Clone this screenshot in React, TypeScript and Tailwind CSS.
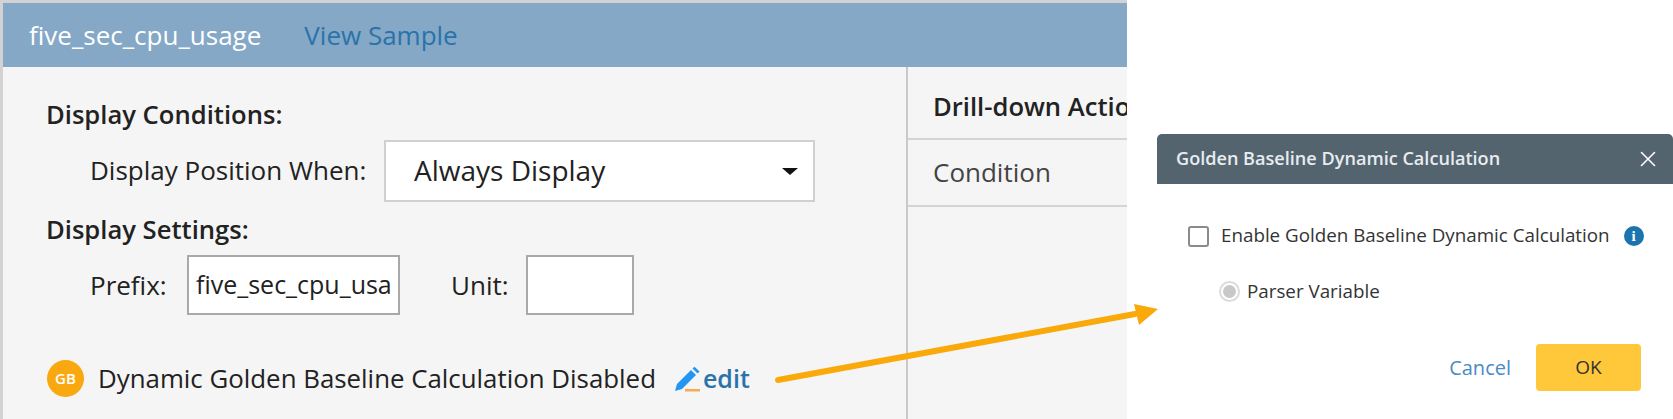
import React from 'react';
import { X } from 'lucide-react';

const font = "font-['Open_Sans',sans-serif]";

const MainPanel = () => {
  return (
    <div className="w-[1127px] h-[419px] shrink-0 flex flex-col overflow-hidden border-t-[3px] border-l-[3px] border-[#d2d2d2] bg-[#f5f5f5]">
      {/* Header */}
      <div className="h-[64px] shrink-0 flex items-center bg-[#84a8c6] pl-[26px]">
        <span className="text-[26px] leading-[36px] text-white">five_sec_cpu_usage</span>
        <span className="ml-[43px] text-[26px] leading-[36px] text-[#2a73aa]">View Sample</span>
      </div>

      <div className="flex flex-1 min-h-0">
        {/* Left column */}
        <div className="w-[903px] shrink-0 pl-[44px] pt-[33px] text-[26px] text-[#222]">
          <h3 className="-ml-[1px] text-[25.6px] font-semibold leading-[30px]">Display Conditions:</h3>

          <div className="flex items-center h-[62px] mt-[10px] pl-[43px]">
            <span className="w-[294px] shrink-0 leading-[34px] pb-[3px]">Display Position When:</span>
            <div className="w-[431px] h-[62px] flex items-center justify-between bg-white border-2 border-[#d0d0d0] pl-[28px] pr-[15px]">
              <span className="text-[28px] leading-[38px] pb-[3px]">Always Display</span>
              <span className="w-0 h-0 border-x-[8px] border-t-[7px] border-x-transparent border-t-[#111]" />
            </div>
          </div>

          <h3 className="-ml-[1px] text-[25.6px] font-semibold leading-[30px] mt-[13px]">Display Settings:</h3>

          <div className="flex items-center h-[60px] mt-[10px] pl-[43px]">
            <span className="w-[97px] shrink-0 leading-[34px]">Prefix:</span>
            <div className="w-[213px] h-[60px] flex items-center bg-white border-2 border-[#a9a9a9] px-[7px]">
              <span className="block overflow-hidden whitespace-nowrap text-[25px]">five_sec_cpu_usage</span>
            </div>
            <span className="ml-[51px] w-[75px] shrink-0 leading-[34px]">Unit:</span>
            <div className="w-[108px] h-[60px] bg-white border-2 border-[#a9a9a9]" />
          </div>

          {/* Golden baseline status */}
          <div className="flex items-center h-[37px] mt-[45px]">
            <span className="w-[37px] h-[37px] shrink-0 flex items-center justify-center rounded-full bg-[#f9a90f] text-[15px] font-semibold text-white">
              GB
            </span>
            <span className="ml-[14px] text-[25.85px] whitespace-nowrap">Dynamic Golden Baseline Calculation Disabled</span>
            <span className="ml-[18px] flex items-center">
              <svg width="28" height="26" viewBox="0 0 28 26">
                <path d="M1 25 L3 18 L17 4 L22 9 L8 23 Z" fill="#2196f3" />
                <path d="M18.5 2.5 L20.5 0.8 L25.5 5.5 L23.5 7.5 Z" fill="#2196f3" />
                <rect x="11" y="23" width="15" height="2.5" fill="#f9a953" />
              </svg>
              <span className="ml-[1px] text-[25px] font-semibold text-[#2a73aa]">edit</span>
            </span>
          </div>
        </div>

        {/* Drill-down column */}
        <div className="flex-1 min-w-0 border-l-2 border-[#c9c9c9]">
          <div className="h-[73px] flex items-center border-b-2 border-[#d4d4d4] pl-[25px] pt-[10px]">
            <span className="text-[25.6px] font-semibold text-[#222] whitespace-nowrap">Drill-down Action</span>
          </div>
          <div className="h-[67px] flex items-center border-b-2 border-[#d4d4d4] pl-[25px]">
            <span className="text-[26px] text-[#444]">Condition</span>
          </div>
        </div>
      </div>
    </div>
  );
};

const Dialog = () => {
  return (
    <div className="w-[516px] shrink-0 ml-[30px] mt-[134px] text-[#333]">
      <div className="h-[50px] flex items-center justify-between bg-[#53646f] rounded-t-[5px] pl-[19px] pr-[12px]">
        <span className="text-[18.1px] font-semibold text-[#e8ecef]">Golden Baseline Dynamic Calculation</span>
        <X size={26} strokeWidth={1.5} className="text-white" />
      </div>

      <div className="flex items-center h-[26px] mt-[39px] pl-[31px] text-[18.8px]">
        <span className="w-[21px] h-[21px] shrink-0 rounded-[3px] border-2 border-[#8a8a8a] bg-white" />
        <span className="ml-[12px] whitespace-nowrap -translate-y-[1px]">Enable Golden Baseline Dynamic Calculation</span>
        <span className="ml-[14px] w-[20px] h-[20px] shrink-0 flex items-center justify-center rounded-full bg-[#1a75ae] text-[15px] font-bold text-white font-['Liberation_Serif',serif]">
          i
        </span>
      </div>

      <div className="flex items-center h-[26px] mt-[29px] pl-[62px] text-[18.8px]">
        <span className="w-[21px] h-[21px] shrink-0 flex items-center justify-center rounded-full border-2 border-[#dcdcdc] bg-white">
          <span className="w-[13px] h-[13px] rounded-full bg-[#c8c8c8]" />
        </span>
        <span className="ml-[7px]">Parser Variable</span>
      </div>

      <div className="flex items-center justify-end mt-[40px] pr-[32px]">
        <span className="text-[20px] text-[#4a8bc4]">Cancel</span>
        <span className="ml-[25px] w-[105px] h-[47px] flex items-center justify-center rounded-[4px] bg-[#ffc83a] text-[19px] text-[#333]">
          OK
        </span>
      </div>
    </div>
  );
};

export default function App() {
  return (
    <div className={`relative w-[1673px] h-[419px] flex overflow-hidden bg-white ${font}`}>
      <MainPanel />
      <Dialog />
      {/* Callout arrow */}
      <svg className="absolute left-0 top-0" width="1673" height="419">
        <line x1="778" y1="380" x2="1135" y2="314" stroke="#f9a90a" strokeWidth="6" strokeLinecap="round" />
        <path d="M1134 304 L1158 309 L1139 325 Z" fill="#f9a90a" />
      </svg>
    </div>
  );
}
